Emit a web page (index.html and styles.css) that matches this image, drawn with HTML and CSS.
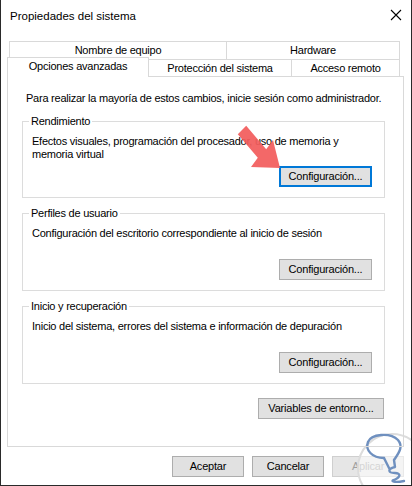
FILE: index.html
```html
<!DOCTYPE html>
<html lang="es">
<head>
<meta charset="utf-8">
<title>Propiedades del sistema</title>
<link rel="stylesheet" href="styles.css">
</head>
<body>
<div class="window">
  <div class="titlebar">
    <span class="title">Propiedades del sistema</span>
    <svg class="close" width="12" height="12" viewBox="0 0 12 12"><path d="M1 1 L11 11 M11 1 L1 11" stroke="#000" stroke-width="1.1" fill="none"/></svg>
  </div>

  <div class="tabs">
    <div class="tabrow row1">
      <div class="tab t-nombre">Nombre de equipo</div>
      <div class="tab t-hardware">Hardware</div>
    </div>
    <div class="tabrow row2">
      <div class="tab selected t-opciones">Opciones avanzadas</div>
      <div class="tab t-proteccion">Protección del sistema</div>
      <div class="tab t-acceso">Acceso remoto</div>
    </div>
  </div>

  <div class="panel">
    <p class="intro">Para realizar la mayoría de estos cambios, inicie sesión como administrador.</p>

    <fieldset class="group">
      <legend>Rendimiento</legend>
      <p class="desc">Efectos visuales, programación del procesador, uso de memoria y<br>memoria virtual</p>
      <div class="btnrow first"><button class="btn cfg focused">Configuración...</button></div>
    </fieldset>

    <fieldset class="group">
      <legend>Perfiles de usuario</legend>
      <p class="desc">Configuración del escritorio correspondiente al inicio de sesión</p>
      <div class="btnrow"><button class="btn cfg">Configuración...</button></div>
    </fieldset>

    <fieldset class="group">
      <legend>Inicio y recuperación</legend>
      <p class="desc">Inicio del sistema, errores del sistema e información de depuración</p>
      <div class="btnrow"><button class="btn cfg">Configuración...</button></div>
    </fieldset>

    <div class="envrow"><button class="btn env">Variables de entorno...</button></div>

    <svg class="arrow" width="50" height="46" viewBox="0 0 50 46">
      <polygon points="4.8,9.2 13.2,0.8 33.2,24.3 40,15 47,43 18,42 24.8,32.7" fill="#f25c5c" fill-opacity="0.93"/>
    </svg>
  </div>

  <div class="footer">
    <button class="btn foot">Aceptar</button>
    <button class="btn foot">Cancelar</button>
    <button class="btn foot disabled">Aplicar</button>
  </div>

  <svg class="watermark" width="60" height="66" viewBox="0 0 60 66">
    <circle cx="40" cy="48" r="34" fill="rgba(255,255,255,0.55)" stroke="#dcdcdc" stroke-width="2"/>
    <path d="M32 38 C20 38 13 30 16 22 C19 14 38 12 46 20 C52 27 46 34 42 40 L43 47 C35 49 36 53 43 53 C49 53 49 57 42 60 C38 61 42 63 52 61" fill="none" stroke="#6f90bf" stroke-width="2.4" stroke-linecap="round" stroke-linejoin="round"/>
    <path d="M32 38 L37 48" fill="none" stroke="#6f90bf" stroke-width="2.4" stroke-linecap="round"/>
  </svg>
</div>
</body>
</html>
```

FILE: styles.css
```css
* { box-sizing: border-box; }
html, body { margin: 0; padding: 0; background: #ffffff; }
body {
  font-family: "Liberation Sans", Arial, sans-serif;
  font-size: 11px;
  letter-spacing: -0.24px;
  color: #000;
}
.window {
  position: relative;
  width: 412px;
  height: 486px;
  background: #ffffff;
  border-left: 1px solid #2a2a2a;
  border-right: 1px solid #2a2a2a;
  border-bottom: 1px solid #2a2a2a;
  overflow: hidden;
}
.titlebar {
  height: 32px;
  display: flex;
  align-items: center;
  justify-content: space-between;
  padding: 0 9px 0 9px;
}
.title { font-size: 11.5px; line-height: 14px; letter-spacing: 0; }
.close { display: block; margin-top: -2px; }

.tabs { margin-top: 9px; }
.tabrow { display: flex; }
.row1 { margin-left: 8px; height: 18px; }
.row2 { margin-left: 6px; margin-top: -2px; height: 19px; align-items: flex-end; }
.tab {
  border-top: 1px solid #d9d9d9;
  border-left: 1px solid #d9d9d9;
  text-align: center;
  background: #fff;
  white-space: nowrap;
}
.row1 .tab { height: 18px; line-height: 16px; }
.t-nombre { width: 217px; }
.t-hardware { width: 174px; border-right: 1px solid #d9d9d9; }
.row2 .tab { height: 17px; line-height: 17px; }
.row2 .tab.selected {
  height: 20px;
  line-height: 16px;
  margin-bottom: -1px;
  border-right: 1px solid #d9d9d9;
  position: relative;
  z-index: 2;
}
.t-opciones { width: 142px; }
.t-proteccion { width: 143px; border-left: none !important; border-right: 1px solid #d9d9d9; }
.t-acceso { width: 108px; border-left: none !important; border-right: 1px solid #d9d9d9; }

.panel {
  position: relative;
  z-index: 1;
  margin-left: 6px;
  width: 397px;
  height: 371px;
  border: 1px solid #d9d9d9;
  padding: 14px 18px 0 14px;
}
.intro { margin: 0 0 9px 4px; line-height: 14px; white-space: nowrap; }

.group {
  margin: 0 0 8px 0;
  padding: 0 12px 10px 9px;
  border: 1px solid #dcdcdc;
  width: 363px;
  min-width: 0;
}
.group legend {
  margin-left: -3px;
  padding: 0 2px;
  line-height: 14px;
  font-size: 11px;
}
.desc { margin: 7px 0 0 0; line-height: 13px; white-space: nowrap; }
.btnrow { display: flex; justify-content: flex-end; margin-top: 19px; }
.btnrow.first { margin-top: 5px; }

.btn {
  font-family: "Liberation Sans", Arial, sans-serif;
  font-size: 11px;
  letter-spacing: -0.2px;
  color: #000;
  background: #e1e1e1;
  border: 1px solid #adadad;
  height: 21px;
  padding: 0;
  margin: 0;
  line-height: 19px;
}
.cfg { width: 93px; }
.focused { border: 2px solid #0078d7; line-height: 17px; }
.envrow { display: flex; justify-content: flex-end; width: 362px; margin-top: 14px; }
.env { width: 126px; }

.footer {
  display: flex;
  justify-content: flex-end;
  gap: 8px;
  margin-top: 9px;
  padding-right: 7px;
}
.foot { width: 72px; }
.foot.disabled { color: #a0a0a0; background: #e6e6e6; border-color: #cfcfcf; }

.arrow { position: absolute; left: 225px; top: 48px; }
.watermark { position: absolute; left: 351px; top: 420px; }
```
